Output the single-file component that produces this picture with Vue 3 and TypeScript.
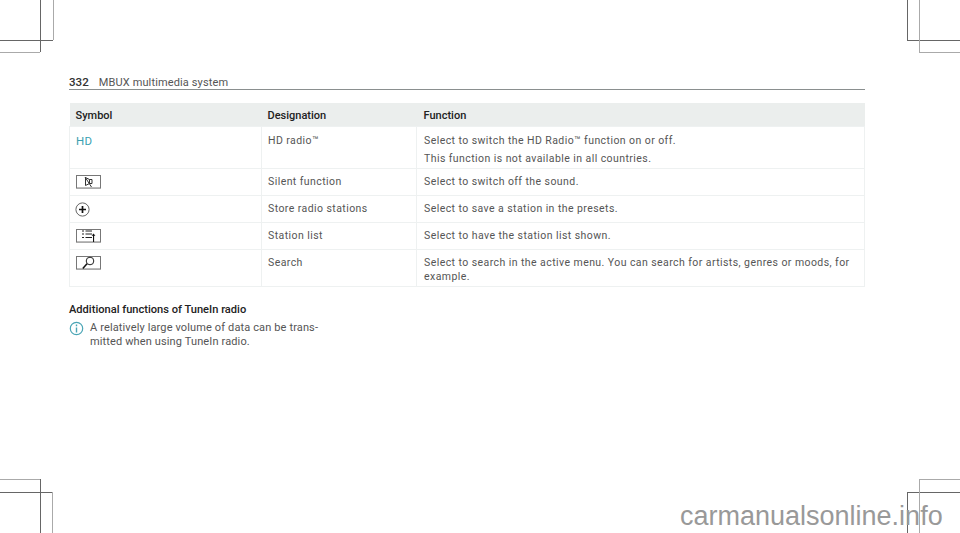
<script setup lang="ts">
interface Row {
  symbol: string
  designation: string
  lines: string[]
}

const rows: Row[] = [
  { symbol: 'hd', designation: 'HD radio™', lines: ['Select to switch the HD Radio™ function on or off.', 'This function is not available in all countries.'] },
  { symbol: 'mute', designation: 'Silent function', lines: ['Select to switch off the sound.'] },
  { symbol: 'plus', designation: 'Store radio stations', lines: ['Select to save a station in the presets.'] },
  { symbol: 'list', designation: 'Station list', lines: ['Select to have the station list shown.'] },
  { symbol: 'search', designation: 'Search', lines: ['Select to search in the active menu. You can search for artists, genres or moods, for example.'] },
]
const marks: string[] = [
  'tl1', 'tl2', 'tl3', 'tl4', 'tr1', 'tr2', 'tr3', 'tr4',
  'bl1', 'bl2', 'bl3', 'bl4', 'br1', 'br2', 'br3', 'br4',
]
</script>

<template>
  <div class="page">
    <i v-for="m in marks" :key="m" class="crop" :class="m"></i>

    <main class="content">
      <header class="running">
        <span class="pageno">332</span>
        <span class="title">MBUX multimedia system</span>
      </header>

      <table class="table">
        <thead>
          <tr>
            <th class="c1">Symbol</th>
            <th class="c2">Designation</th>
            <th class="c3">Function</th>
          </tr>
        </thead>
        <tbody>
          <tr v-for="row in rows" :key="row.symbol" :class="'r-' + row.symbol">
            <td class="sym">
              <span v-if="row.symbol === 'hd'" class="hd">HD</span>
              <svg v-else-if="row.symbol === 'mute'" class="key" width="25" height="14" viewBox="0 0 25 14">
                <rect x="0.5" y="0.5" width="24" height="12.5" fill="#fff" stroke="#777" />
                <path d="M0 13.5h25" stroke="#aaa" />
                <path d="M13.5 4.5h2.5v4h-2.5zM13.5 4.5L9.5 2.5v8l4-2M9 2l6.5 10" fill="none" stroke="#333" />
              </svg>
              <svg v-else-if="row.symbol === 'plus'" class="round" width="15" height="15" viewBox="0 0 15 15">
                <circle cx="7.5" cy="7.5" r="6.6" fill="#fff" stroke="#666" />
                <path d="M7.5 4v7M4 7.5h7" fill="none" stroke="#111" stroke-width="1.7" />
              </svg>
              <svg v-else-if="row.symbol === 'list'" class="key" width="25" height="14" viewBox="0 0 25 14">
                <rect x="0.5" y="0.5" width="24" height="12.5" fill="#fff" stroke="#777" />
                <path d="M0 13.5h25" stroke="#aaa" />
                <path d="M6 2h2M6 5h2M6 8.5h2M9.5 2h6.5M9.5 5h6.5M9.5 8.5h6.5" fill="none" stroke="#222" />
                <path d="M15.6 6.8l1.9-2.3 1.9 2.3zM17 6.5h1.1V13H17z" fill="#111" />
              </svg>
              <svg v-else class="key" width="25" height="14" viewBox="0 0 25 14">
                <rect x="0.5" y="0.5" width="24" height="12.5" fill="#fff" stroke="#777" />
                <path d="M0 13.5h25" stroke="#aaa" />
                <circle cx="14" cy="5" r="3.8" fill="#fff" stroke="#222" />
                <path d="M11 7.8L6.8 12.6" fill="none" stroke="#111" stroke-width="1.5" />
              </svg>
            </td>
            <td class="des">{{ row.designation }}</td>
            <td class="fn">
              <p v-for="line in row.lines" :key="line">{{ line }}</p>
            </td>
          </tr>
        </tbody>
      </table>

      <h2 class="heading">Additional functions of TuneIn radio</h2>
      <div class="note">
        <svg class="info" width="15" height="15" viewBox="0 0 15 15">
          <circle cx="7.5" cy="7.5" r="6.2" fill="none" stroke="#4aa5b5" stroke-width="1.2" />
          <path d="M7.5 3.6v1.6M7.5 6.4v5" fill="none" stroke="#4aa5b5" stroke-width="1.4" />
        </svg>
        <p>A relatively large volume of data can be trans-<br />mitted when using TuneIn radio.</p>
      </div>
    </main>

    <div class="mark">carmanualsonline.info</div>
  </div>
</template>

<style>
html, body { margin: 0; background: #fff; }
</style>

<style scoped>
.page {
  position: relative;
  width: 960px;
  height: 533px;
  overflow: hidden;
  background: #fff;
  font-family: Roboto, "Liberation Sans", Arial, sans-serif;
  color: #3c3c3c;
}
.crop { position: absolute; display: block; background: #666; }
.tl1, .tl2, .tr1, .tr2, .bl1, .bl2, .br1, .br2 { height: 1px; }
.tl3, .tl4, .tr3, .tr4, .bl3, .bl4, .br3, .br4 { width: 1px; }
.tl2, .tl4, .tr2, .tr4, .bl1, .bl4, .br1, .br4 { background: #aaa; }
.tl1 { left: 0; top: 40px; width: 53px; }
.tl2 { left: 0; top: 52px; width: 40px; }
.tl3 { left: 40px; top: 0; height: 52px; }
.tl4 { left: 53px; top: 0; height: 40px; }
.tr1 { left: 907px; top: 40px; width: 53px; }
.tr2 { left: 919px; top: 52px; width: 41px; }
.tr3 { left: 907px; top: 0; height: 40px; }
.tr4 { left: 919px; top: 0; height: 52px; }
.bl1 { left: 0; top: 479px; width: 40px; }
.bl2 { left: 0; top: 492px; width: 53px; }
.bl3 { left: 40px; top: 479px; height: 54px; }
.bl4 { left: 52px; top: 492px; height: 41px; }
.br1 { left: 919px; top: 479px; width: 41px; }
.br2 { left: 907px; top: 492px; width: 53px; }
.br3 { left: 907px; top: 492px; height: 41px; }
.br4 { left: 919px; top: 479px; height: 54px; }
.content {
  box-sizing: border-box;
  width: 960px;
  padding: 75px 95px 0 69px;
}
.running {
  display: flex;
  align-items: baseline;
  gap: 10px;
  height: 14px;
  border-bottom: 1px solid #8a8f8f;
  font-size: 11px;
  line-height: 14px;
}
.pageno { font-size: 11.6px; font-weight: 500; color: #333; }
.title { color: #555; letter-spacing: 0.13px; }
.table {
  width: 796px;
  margin-top: 13px;
  border-collapse: collapse;
  table-layout: fixed;
  font-size: 10.5px;
  line-height: 14px;
  letter-spacing: 0.43px;
}
th {
  box-sizing: border-box;
  height: 23px;
  padding: 3px 6px 0;
  background: #ebeeed;
  text-align: left;
  font-weight: 500;
  font-size: 11px;
  letter-spacing: 0;
  color: #222;
}
.c1 { width: 192px; }
.c2 { width: 155px; }
th.c3, .fn { padding-left: 7px; }
td {
  box-sizing: border-box;
  vertical-align: top;
  height: 27px;
  padding: 6px 6px 0;
  border: 1px solid #eef1f1;
  color: #555;
}
.r-hd td { height: 42px; padding-top: 7px; }
.r-search td { height: 37px; }
.hd { color: #3a9fb0; font-size: 11.5px; letter-spacing: 0.2px; }
.fn p { margin: 0; }
.fn p + p { margin-top: 4px; }
.key, .round { display: block; }
.round { margin-left: -1px; }
.heading {
  margin: 16px 0 0;
  font-size: 11.1px;
  line-height: 14px;
  font-weight: 500;
  color: #222;
}
.note {
  display: flex;
  gap: 6px;
  margin-top: 4px;
  font-size: 11px;
  line-height: 14px;
  letter-spacing: 0.13px;
  color: #555;
}
.info { flex: none; }
.note p { margin: 0; }
.mark {
  position: absolute;
  left: 680px;
  top: 501px;
  font-family: "Liberation Sans", Arial, sans-serif;
  font-size: 27px;
  line-height: 30px;
  color: #999;
  white-space: nowrap;
}
</style>
